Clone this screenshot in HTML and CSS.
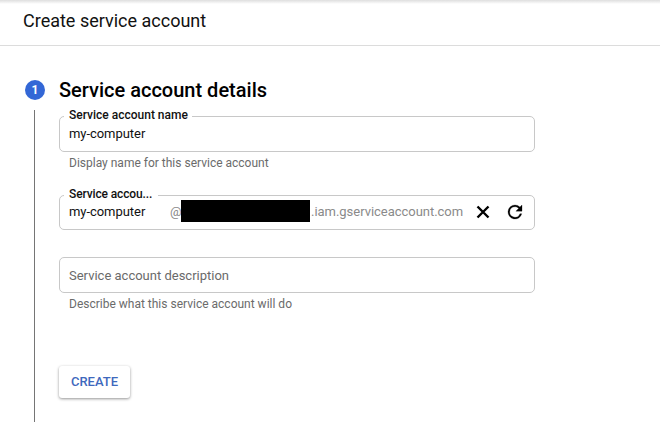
FILE: index.html
```html
<!DOCTYPE html>
<html lang="en">
<head>
<meta charset="utf-8">
<title>Create service account</title>
<link rel="stylesheet" href="styles.css">
</head>
<body>
<header class="header"><h1 class="title">Create service account</h1></header>
<main class="step">
  <div class="rail">
    <span class="badge">1</span>
    <span class="line"></span>
  </div>
  <form class="form">
    <h2 class="heading">Service account details</h2>
    <div class="field">
      <span class="label">Service account name</span>
      <span class="value">my-computer</span>
    </div>
    <p class="hint">Display name for this service account</p>
    <div class="field id-field">
      <span class="label id-label">Service accou...</span>
      <span class="value id-value">my-computer</span>
      <span class="at">@</span>
      <span class="redacted"></span>
      <span class="domain">.iam.gserviceaccount.com</span>
      <svg class="icon clear" viewBox="0 0 16 16"><path d="M2.5 2.5l11 11M13.5 2.5l-11 11"/></svg>
      <svg class="icon refresh" viewBox="4 4 16 16"><path d="M17.65 6.35A7.96 7.96 0 0 0 12 4a8 8 0 1 0 7.73 10h-2.08A6 6 0 1 1 12 6c1.66 0 3.14.69 4.22 1.78L13 11h7V4z"/></svg>
    </div>
    <div class="field description">
      <span class="placeholder">Service account description</span>
    </div>
    <p class="hint description-hint">Describe what this service account will do</p>
    <button class="create" type="button">CREATE</button>
  </form>
</main>
</body>
</html>
```
FILE: styles.css
```css
* { box-sizing: border-box; }
body {
  margin: 0;
  height: 433px;
  overflow: hidden;
  background: #fff;
  color: #111;
  font-family: Roboto, sans-serif;
  font-size: 13px;
}
h1, h2, p { margin: 0; }
.header {
  height: 46px;
  padding: 10px 23px 0;
  border-bottom: 1px solid #dcdcdc;
  background: linear-gradient(#dedede, #fff 4px);
}
.title { font-size: 18px; line-height: 22px; font-weight: 400; }
.step { display: flex; padding: 34px 0 0 25px; }
.rail {
  display: flex;
  flex-direction: column;
  align-items: center;
  width: 20px;
  margin-right: 14px;
}
.badge {
  width: 20px;
  height: 20px;
  border-radius: 50%;
  background: #3367d6;
  color: #fff;
  font-size: 12px;
  font-weight: 700;
  line-height: 20px;
  text-align: center;
}
.line { width: 1px; height: 312px; margin: 10px 1px 0 0; background: #757575; }
.form { width: 476px; }
.heading { height: 36px; color: #000; font-size: 20px; line-height: 20px; font-weight: 500; }
.field {
  position: relative;
  display: flex;
  align-items: center;
  height: 36px;
  padding: 0 9px;
  border: 1px solid #c8c8c8;
  border-radius: 5px;
  line-height: 16px;
}
.label {
  position: absolute;
  top: -10px;
  left: 4px;
  padding: 0 4px 0 5px;
  background: #fff;
  color: #111;
  font-size: 12px;
  font-weight: 500;
}
.id-label { letter-spacing: -.13px; padding-right: 6px; }
.value { letter-spacing: -.05px; }
.hint { padding: 3px 10px 0; height: 43px; color: #6b6b6b; font-size: 12px; line-height: 16px; }
.id-field { height: 35px; padding-bottom: 1px; }
.id-value { width: 101px; }
.at { width: 11px; color: #8a8a8a; }
.redacted { width: 129px; height: 22px; margin-top: -2px; background: #000; }
.domain { width: 166px; padding-left: 1px; color: #8a8a8a; letter-spacing: -.03px; }
.icon { flex: none; }
.clear { width: 16px; height: 16px; margin-left: -1px; fill: none; stroke: #000; stroke-width: 2.4; }
.refresh { width: 14px; height: 14px; margin-left: 17px; fill: #000; stroke: #000; stroke-width: .3; overflow: visible; }
.description { margin-top: 27px; padding-top: 2px; }
.placeholder { color: #6a6a6a; }
.description-hint { height: 73px; }
.create {
  display: block;
  width: 71px;
  height: 32px;
  padding: 0 0 2px;
  border: 0;
  border-radius: 3px;
  background: #fff;
  box-shadow: 0 1px 3px rgba(0, 0, 0, .42);
  color: #3f69bd;
  font: 500 13px Roboto, sans-serif;
}
```
